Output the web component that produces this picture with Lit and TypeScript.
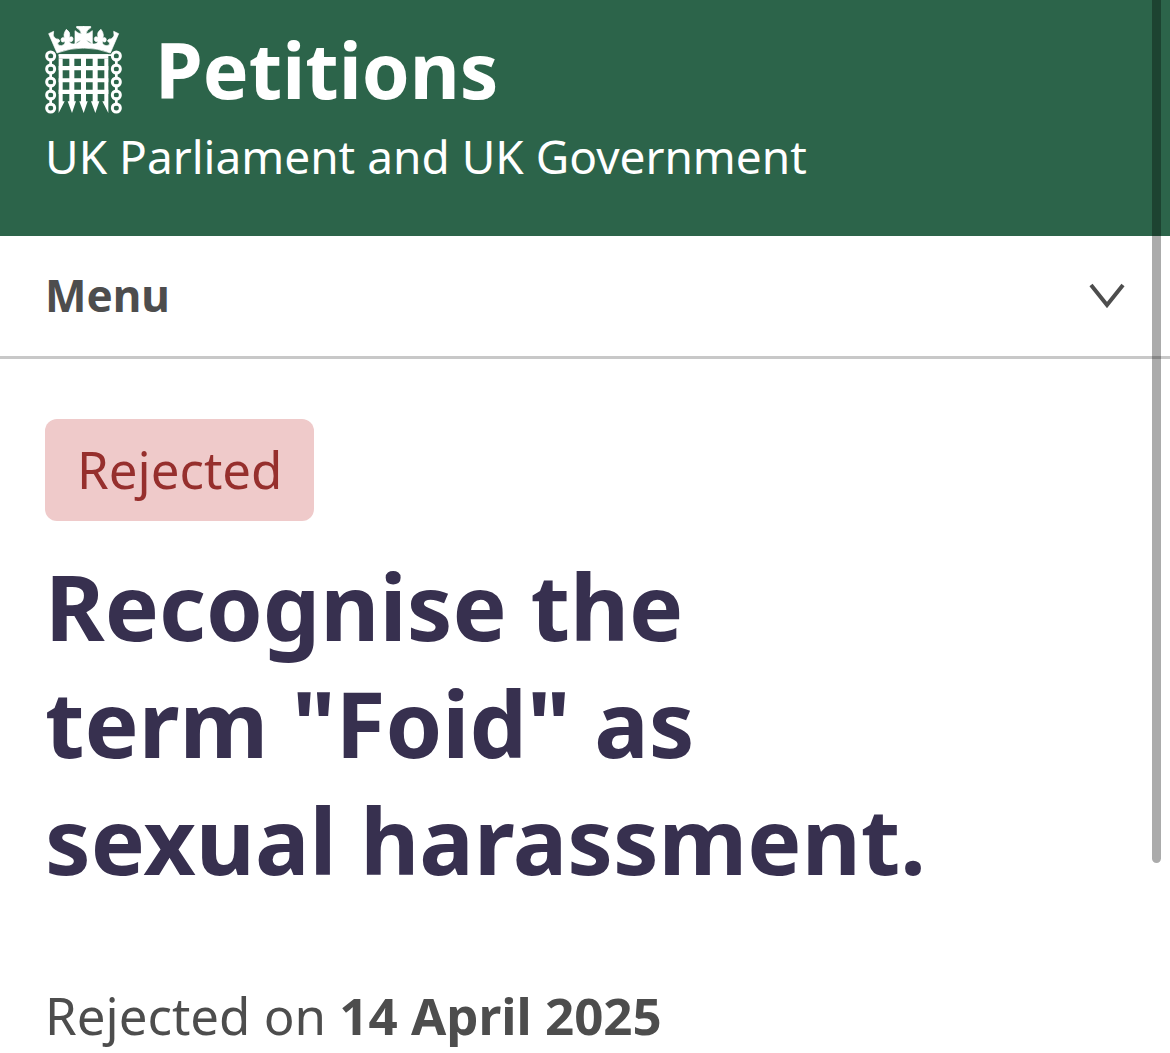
import { LitElement, html, css, svg } from 'lit'
import { customElement, property, state } from 'lit/decorators.js'

const CHAIN_LINKS = [122, 161, 200, 239, 278]

// left half of the crown, mirrored for the right one
const CROWN_HALF =
  'M146 98Q103 98 65 113L40 55L55 48L54 58Q53 61 57 66Q62 73 69 71L74 77L67 83Q67 92 78 91Q87 89 89 83L88 78' +
  'Q83 82 79 79Q75 73 79 68Q84 65 88 69Q86 65 86 58Q86 52 93 42Q104 50 103 57Q103 63 102 68Q105 63 111 65Q115 70 112 76' +
  'Q108 81 103 78L103 81Q107 87 115 86Q126 85 132 80L137 74Q127 78 119 85V46Q128 54 138 56Q136 42 124 38V33H146Z'

@customElement('portcullis-crest')
export class PortcullisCrest extends LitElement {
  static styles = css`
    :host {
      display: block;
    }

    svg {
      display: block;
      width: 78px;
      height: 88px;
    }
  `

  private chain(x: number) {
    return svg`
      ${CHAIN_LINKS.map((y) => svg`<circle cx=${x} cy=${y} r="12" fill="none" stroke="#fff" stroke-width="9" />`)}
      ${CHAIN_LINKS.slice(1).map((y) => svg`<path d="M${x - 4} ${y - 32}h8v25h-8z" fill="#fff" />`)}
    `
  }

  render() {
    return html`
      <svg viewBox="29 32 234 264" fill="#fff" aria-hidden="true">
        <g stroke="#fff" stroke-width="2">
          <path d=${CROWN_HALF} />
          <path d=${CROWN_HALF} transform="translate(290 0) scale(-1 1)" />
        </g>
        <path d="M59 117H230V122H219V293L201 258H207V130H219V122H70V293L88 258H82V130H70V117Z" />
        <path d="M70 117h149v13H70zM70 152h149v13H70zM70 189h149v12H70zM70 223h149v13H70z" />
        <path d="M102 122h15v136h5l-12 35l-13-35h5zM137 122h15v136h5l-12 35l-13-35h5zM172 122h15v136h5l-12 35l-13-35h5z" />
        ${this.chain(46)} ${this.chain(243)}
      </svg>
    `
  }
}

@customElement('site-header')
export class SiteHeader extends LitElement {
  static styles = css`
    :host {
      display: block;
      padding: 25px 45px 48px;
      background: #2c644a;
      color: #fff;
    }

    .brand {
      display: flex;
      align-items: center;
      gap: 32px;
      height: 90px;
      color: inherit;
      text-decoration: none;
    }

    .name {
      font-size: 77px;
      font-weight: 700;
      line-height: 88px;
    }

    .tagline {
      margin: 9px 0 0;
      font-size: 46px;
      line-height: 64px;
    }
  `

  render() {
    return html`
      <a class="brand" href="#">
        <portcullis-crest></portcullis-crest>
        <span class="name">Petitions</span>
      </a>
      <p class="tagline">UK Parliament and UK Government</p>
    `
  }
}

@customElement('site-menu')
export class SiteMenu extends LitElement {
  static styles = css`
    :host {
      display: block;
      border-bottom: 3px solid #c8c8c8;
    }

    button {
      display: flex;
      align-items: center;
      justify-content: space-between;
      width: 100%;
      padding: 27px 45px 29px;
      border: none;
      background: none;
      color: #4d4d4d;
      font: inherit;
      font-size: 44px;
      font-weight: 700;
      line-height: 64px;
      cursor: pointer;
    }

    .chevron {
      width: 36px;
      height: 26px;
    }
  `

  @state() private open = false

  render() {
    return html`
      <button aria-expanded=${this.open} @click=${() => (this.open = !this.open)}>
        Menu
        <svg class="chevron" viewBox="0 0 36 26" aria-hidden="true">
          <path d="M2 3L18 23L34 3" fill="none" stroke="#4d4d4d" stroke-width="4" />
        </svg>
      </button>
    `
  }
}

@customElement('petition-summary')
export class PetitionSummary extends LitElement {
  static styles = css`
    :host {
      display: block;
      padding: 60px 45px 0;
    }

    .status {
      display: inline-block;
      padding: 15px 32px 17px;
      border-radius: 12px;
      background: #efcaca;
      color: #962f2d;
      font-size: 51px;
      line-height: 70px;
    }

    h1 {
      margin: 27px 0 0;
      color: #37304f;
      font-size: 91px;
      font-weight: 700;
      line-height: 117px;
      white-space: pre-line;
    }

    .date {
      margin: 81px 0 0;
      color: #4d4d4d;
      font-size: 51px;
      line-height: 70px;
    }
  `

  @property() status = ''
  @property() heading = ''
  @property() date = ''

  render() {
    return html`
      <span class="status">${this.status}</span>
      <h1>${this.heading}</h1>
      <p class="date">${this.status} on <strong>${this.date}</strong></p>
    `
  }
}

@customElement('app-root')
export class AppRoot extends LitElement {
  static styles = css`
    :host {
      display: block;
      position: relative;
      height: 100vh;
      overflow: hidden;
      background: #fff;
      font-family: 'Noto Sans', 'Open Sans', sans-serif;
    }

    .scrollbar {
      position: absolute;
      top: 0;
      right: 9px;
      width: 9px;
      height: 82%;
      border-radius: 0 0 5px 5px;
      background: rgba(0, 0, 0, 0.33);
    }
  `

  render() {
    return html`
      <site-header></site-header>
      <site-menu></site-menu>
      <main>
        <petition-summary
          status="Rejected"
          .heading=${'Recognise the\nterm "Foid" as\nsexual harassment.'}
          date="14 April 2025"
        ></petition-summary>
      </main>
      <div class="scrollbar"></div>
    `
  }
}
